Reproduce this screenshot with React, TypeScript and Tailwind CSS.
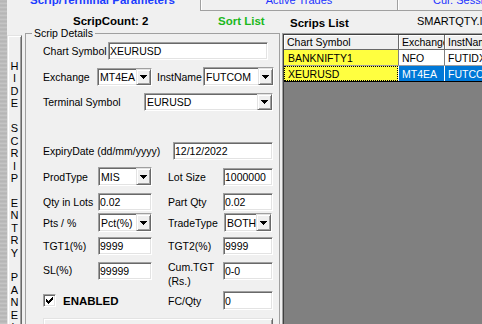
import React from 'react';

const sunken =
  'border border-t-[#a0a0a0] border-l-[#a0a0a0] border-r-white border-b-white shadow-[inset_1px_1px_0_#696969,inset_-1px_-1px_0_#e3e3e3]';
const raised =
  'border border-t-[#e3e3e3] border-l-[#e3e3e3] border-r-[#696969] border-b-[#696969] shadow-[inset_1px_1px_0_#fff,inset_-1px_-1px_0_#a0a0a0]';

function DropButton() {
  return (
    <div className={`${raised} w-[15px] shrink-0 bg-[#f0f0f0] flex items-center justify-center`}>
      <svg width="7" height="4" viewBox="0 0 7 4" shapeRendering="crispEdges">
        <path d="M0 0H7V1H6V2H5V3H4V4H3V3H2V2H1V1H0Z" fill="#000" />
      </svg>
    </div>
  );
}

function TextBox({ value, className }: { value: string; className: string }) {
  return (
    <div className={`${sunken} bg-white flex items-center pl-[1px] overflow-hidden whitespace-nowrap shrink-0 ${className}`}>
      {value}
    </div>
  );
}

function Combo({ value, className }: { value: string; className: string }) {
  return (
    <div className={`${sunken} bg-white flex items-stretch overflow-hidden shrink-0 ${className}`}>
      <div className="flex-1 min-w-0 overflow-hidden whitespace-nowrap pl-[2px] flex items-center">{value}</div>
      <DropButton />
    </div>
  );
}

function Label({ text, className }: { text: string; className: string }) {
  return <div className={`shrink-0 whitespace-nowrap ${className}`}>{text}</div>;
}

const stripText = 'HIDE SCRIP ENTRY PANEL'.split('');

export default function App() {
  return (
    <div className="w-[482px] h-[324px] overflow-hidden bg-[#f0f0f0] flex font-['Liberation_Sans',Arial,sans-serif] text-[10.5px] leading-[12px] text-black">
      {/* textured desktop edge */}
      <div className="w-[7px] h-full shrink-0 bg-[repeating-linear-gradient(0deg,#b9b9b9_0px,#cfcfcf_1px,#a9a9a9_2px,#c3c3c3_3px,#b2b2b2_4px)]" />

      <div className="flex-1 min-w-0 flex flex-col">
        {/* tabs */}
        <div className="h-[11px] flex shrink-0">
          <div className="w-[193px] shrink-0 pl-[23px]">
            <div className="mt-[-6.5px] font-bold text-[11.5px] leading-[13px] text-[#1c3cff] whitespace-nowrap">
              Scrip/Terminal Parameters
            </div>
          </div>
          <div className="w-[197px] shrink-0 border-l border-b border-[#a0a0a0] shadow-[inset_1px_0_0_#fff] flex justify-center">
            <div className="mt-[-6.5px] text-[11px] leading-[13px] text-[#2233ff] whitespace-nowrap">Active Trades</div>
          </div>
          <div className="flex-1 border-l border-b border-[#a0a0a0] shadow-[inset_1px_0_0_#fff] pl-[35px] overflow-hidden">
            <div className="mt-[-6.5px] text-[11px] leading-[13px] text-[#2233ff] whitespace-nowrap">Cur. Session</div>
          </div>
        </div>

        {/* header labels */}
        <div className="h-[16px] flex shrink-0 items-start whitespace-nowrap">
          <div className="w-[211px] shrink-0 pl-[66px] mt-[3.5px] font-bold text-[11.5px] leading-[13px]">ScripCount: 2</div>
          <div className="w-[72px] shrink-0 mt-[3.5px] font-bold text-[11.5px] leading-[13px] text-[#1cb81c]">Sort List</div>
          <div className="w-[127px] shrink-0 mt-[5.5px] font-bold text-[11.5px] leading-[13px]">Scrips List</div>
          <div className="flex-1 overflow-hidden mt-[3.7px] text-[11px] leading-[13px]">SMARTQTY.INI</div>
        </div>

        {/* body */}
        <div className="flex-1 min-h-0 flex items-start">
          {/* vertical hide button */}
          <div className={`${raised} w-[15px] h-[320px] mt-[8px] shrink-0 bg-[#f0f0f0] flex flex-col items-center pt-[24px] text-[11px] leading-[12.45px]`}>
            {stripText.map((c, i) => (
              <span key={i} className="h-[12.45px]">
                {c === ' ' ? '\u00a0' : c}
              </span>
            ))}
          </div>

          {/* scrip details frame */}
          <fieldset className="ml-[3px] w-[255px] h-[400px] shrink-0 min-w-0 border border-[#a0a0a0] p-0 m-0">
            <legend className="ml-[6px] px-[2px] leading-[12px]">Scrip Details</legend>
            <div className="flex flex-col pl-[17px] mt-[3px]">
              <div className="h-[18px] flex items-center">
                <Label text="Chart Symbol" className="w-[65px]" />
                <TextBox value="XEURUSD" className="w-[160px] h-[18px]" />
              </div>

              <div className="h-[19px] mt-[7px] flex items-center">
                <Label text="Exchange" className="w-[54px]" />
                <Combo value="MT4EA" className="w-[55px] h-[18px]" />
                <Label text="InstName" className="ml-[5px] w-[46px]" />
                <Combo value="FUTCOM" className="w-[71px] h-[19px]" />
              </div>

              <div className="h-[18px] mt-[7px] flex items-center">
                <Label text="Terminal Symbol" className="w-[101px]" />
                <Combo value="EURUSD" className="w-[129px] h-[18px]" />
              </div>

              <div className="h-[18px] mt-[31px] flex items-center">
                <Label text="ExpiryDate (dd/mm/yyyy)" className="w-[130px]" />
                <TextBox value="12/12/2022" className="w-[100px] h-[18px]" />
              </div>

              <div className="h-[19px] mt-[7px] flex items-center">
                <Label text="ProdType" className="w-[55px]" />
                <Combo value="MIS" className="w-[54px] h-[19px]" />
                <Label text="Lot Size" className="ml-[16px] w-[55px]" />
                <TextBox value="1000000" className="w-[50px] h-[18px]" />
              </div>

              <div className="h-[18px] mt-[7px] flex items-center">
                <Label text="Qty in Lots" className="w-[55px]" />
                <TextBox value="0.02" className="w-[54px] h-[18px]" />
                <Label text="Part Qty" className="ml-[16px] w-[55px]" />
                <TextBox value="0.02" className="w-[50px] h-[18px]" />
              </div>

              <div className="h-[19px] mt-[2px] flex items-center">
                <Label text="Pts / %" className="w-[55px]" />
                <Combo value="Pct(%)" className="w-[54px] h-[19px]" />
                <Label text="TradeType" className="ml-[16px] w-[56px]" />
                <Combo value="BOTH" className="w-[48px] h-[19px]" />
              </div>

              <div className="h-[18px] mt-[5px] flex items-center">
                <Label text="TGT1(%)" className="w-[55px]" />
                <TextBox value="9999" className="w-[54px] h-[18px]" />
                <Label text="TGT2(%)" className="ml-[16px] w-[55px]" />
                <TextBox value="9999" className="w-[50px] h-[18px]" />
              </div>

              <div className="h-[18px] mt-[7px] flex items-start">
                <Label text="SL(%)" className="w-[55px] mt-[2px]" />
                <TextBox value="99999" className="w-[54px] h-[18px]" />
                <div className="ml-[16px] w-[55px] shrink-0 mt-[-2px] leading-[14px]">
                  Cum.TGT
                  <br />
                  (Rs.)
                </div>
                <TextBox value="0-0" className="w-[50px] h-[18px]" />
              </div>

              <div className="h-[19px] mt-[11px] flex items-center">
                <div className="w-[125px] shrink-0 flex items-center">
                  <div className={`${sunken} w-[13px] h-[13px] bg-white flex items-center justify-center`}>
                    <svg width="7" height="7" viewBox="0 0 7 7" shapeRendering="crispEdges">
                      <path
                        d="M6 0H7V3H6V4H5V5H4V6H3V7H2V6H1V5H0V2H1V3H2V4H3V3H4V2H5V1H6Z"
                        fill="#000"
                      />
                    </svg>
                  </div>
                  <span className="ml-[7px] font-bold text-[11.5px]">ENABLED</span>
                </div>
                <Label text="FC/Qty" className="w-[55px]" />
                <TextBox value="0" className="w-[50px] h-[19px]" />
              </div>

              <div className={`${raised} mt-[8px] w-[230px] h-[24px] bg-[#f0f0f0]`} />
            </div>
          </fieldset>

          {/* scrips grid */}
          <div className="ml-[2px] mt-[6px] flex-1 min-w-0 h-[300px] border-t border-l border-[#a0a0a0] shadow-[inset_1px_1px_0_#404040] bg-[#808080] pl-[1px] pt-[1px] overflow-hidden">
            <div className="h-[15px] flex bg-[#f0f0f0] border-b border-[#696969] whitespace-nowrap">
              <div className="w-[115px] shrink-0 border-r border-[#696969] shadow-[inset_1px_1px_0_#fff] pl-[3px] flex items-center">Chart Symbol</div>
              <div className="w-[46px] shrink-0 border-r border-[#696969] shadow-[inset_1px_1px_0_#fff] pl-[3px] flex items-center overflow-hidden">Exchange</div>
              <div className="flex-1 shadow-[inset_1px_1px_0_#fff] pl-[3px] flex items-center overflow-hidden">InstName</div>
            </div>
            <div className="h-[16px] flex border-b border-[#a0a0a0] whitespace-nowrap">
              <div className="w-[115px] shrink-0 bg-[#ffff40] border-r border-[#808080] pl-[4px] flex items-center">BANKNIFTY1</div>
              <div className="w-[46px] shrink-0 bg-white border-r border-[#808080] pl-[3px] flex items-center overflow-hidden">NFO</div>
              <div className="flex-1 bg-white pl-[3px] flex items-center overflow-hidden">FUTIDX</div>
            </div>
            <div className="h-[16px] flex border-b border-black whitespace-nowrap">
              <div className="w-[115px] shrink-0 bg-[#ffff40] border-r border-white">
                <div className="h-full border border-dotted border-black pl-[3px] flex items-center">XEURUSD</div>
              </div>
              <div className="w-[46px] shrink-0 bg-[#0078d7] text-white border-r border-white pl-[3px] flex items-center overflow-hidden">MT4EA</div>
              <div className="flex-1 bg-[#0078d7] text-white pl-[3px] flex items-center overflow-hidden">FUTCOM</div>
            </div>
          </div>
        </div>
      </div>
    </div>
  );
}
